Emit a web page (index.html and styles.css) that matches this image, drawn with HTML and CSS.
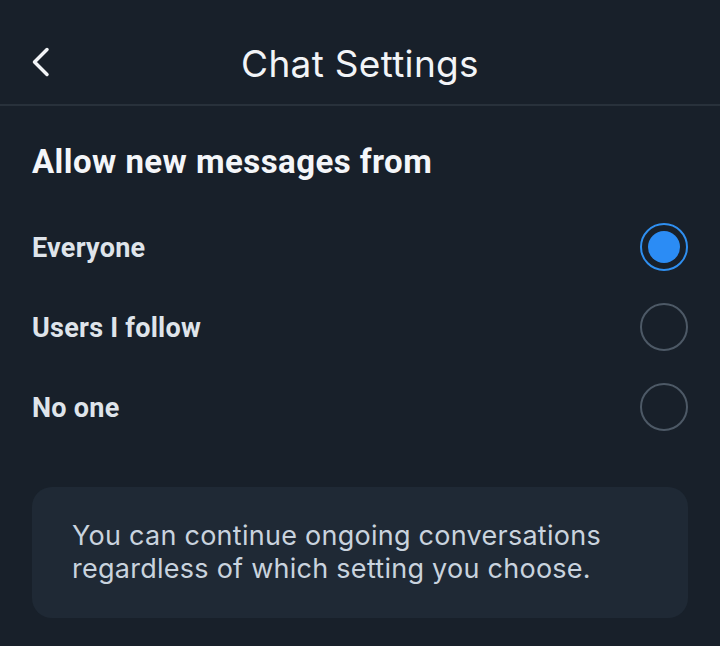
FILE: index.html
```html
<!DOCTYPE html>
<html>
<head>
<meta charset="utf-8">
<link rel="stylesheet" href="styles.css">
</head>
<body>
<div class="app">
  <header class="topbar">
    <button class="back" aria-label="Back">
      <svg width="20" height="30" viewBox="0 0 20 30"><path d="M17 2.5 L4.5 15 L17 27.5" fill="none" stroke="#f2f4f7" stroke-width="3.5" stroke-linecap="round" stroke-linejoin="round"/></svg>
    </button>
    <h1 class="title">Chat Settings</h1>
  </header>
  <main class="content">
    <h2 class="section-title">Allow new messages from</h2>
    <ul class="options">
      <li class="option"><span class="label">Everyone</span><span class="radio checked"></span></li>
      <li class="option"><span class="label">Users I follow</span><span class="radio"></span></li>
      <li class="option"><span class="label">No one</span><span class="radio"></span></li>
    </ul>
    <div class="note">You can continue ongoing conversations regardless of which setting you choose.</div>
  </main>
</div>
</body>
</html>
```
FILE: styles.css
```css
html, body { margin: 0; padding: 0; background: #18202a; }
body { font-family: Inter, "Noto Sans", sans-serif; color: #f2f4f7; }
.app { width: 720px; height: 646px; overflow: hidden; }
.topbar {
  position: relative;
  height: 104px;
  border-bottom: 2px solid #28313b;
  display: flex; align-items: center; justify-content: center;
}
.back {
  position: absolute; left: 30px; top: 47px;
  background: none; border: 0; padding: 0; width: 20px; height: 30px;
}
.back svg { display: block; }
.title { margin: 0; font-weight: 400; font-size: 37px; letter-spacing: 0.3px; color: #f2f4f7; padding-top: 22px; }
.content { padding: 0 32px; }
.section-title {
  margin: 0; padding-top: 37px;
  font-family: Roboto, sans-serif; font-weight: 700; font-size: 33px; letter-spacing: 0.45px; line-height: 38px; color: #f4f6f9;
}
.options { list-style: none; margin: 26px 0 0; padding: 0; }
.option { height: 80px; display: flex; align-items: center; justify-content: space-between; }
.label { font-family: Roboto, sans-serif; font-weight: 700; font-size: 27px; letter-spacing: 0.25px; color: #dfe4ea; padding-top: 2px; }
.radio {
  width: 44px; height: 44px; border-radius: 50%;
  border: 2px solid #4d5966; box-sizing: content-box;
  position: relative;
}
.radio.checked { border-color: #2f8ff0; }
.radio.checked::after {
  content: ""; position: absolute; left: 6px; top: 6px; width: 32px; height: 32px; border-radius: 50%; background: #2b8cf5;
}
.note {
  margin-top: 40px;
  background: #1f2935; border-radius: 20px;
  padding: 32px 40px 33px;
  font-size: 27px; letter-spacing: 0.26px; line-height: 33px; color: #c9d3de;
}
```
